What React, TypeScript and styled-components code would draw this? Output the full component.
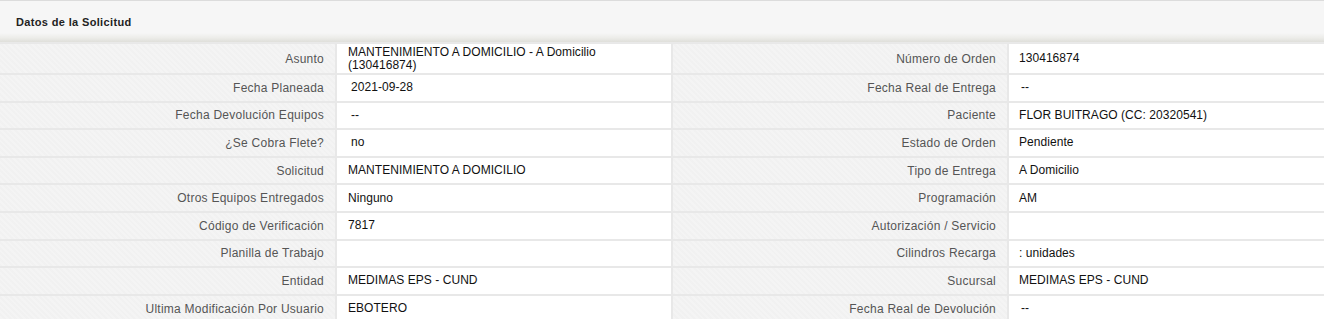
import React from 'react';
import styled, { createGlobalStyle } from 'styled-components';

const GlobalStyle = createGlobalStyle`
  html, body {
    margin: 0;
    padding: 0;
    background: #ffffff;
  }
  body {
    font-family: 'Liberation Sans', Arial, sans-serif;
    font-size: 12px;
  }
`;

const Panel = styled.section`
  width: 1324px;
  background: #e8e8e8;
`;

const PanelHeader = styled.header`
  height: 43px;
  box-sizing: border-box;
  border-top: 1px solid #dcdcdc;
  border-bottom: 1px solid #e9e9e9;
  background: linear-gradient(
    to bottom,
    #f6f6f6 0%,
    #f6f6f6 78%,
    #ecece9 90%,
    #dfdfda 100%
  );
  display: flex;
  align-items: center;
  padding-left: 16px;
`;

const Title = styled.h3`
  margin: 0;
  font-size: 11px;
  font-weight: bold;
  color: #222;
  letter-spacing: 0.35px;
`;

const Grid = styled.div`
  display: grid;
  grid-template-columns: 335px 334px 334px 1fr;
  grid-template-rows: 29px repeat(9, 25.6px);
  gap: 2px;
  padding-top: 1px;
`;

const Label = styled.div`
  display: flex;
  align-items: center;
  justify-content: flex-end;
  padding-right: 11px;
  color: #555;
  letter-spacing: 0.25px;
  background-color: #f4f4f4;
  background-image: repeating-linear-gradient(
    45deg,
    rgba(0, 0, 0, 0.012) 0px,
    rgba(0, 0, 0, 0.012) 2px,
    rgba(255, 255, 255, 0.03) 2px,
    rgba(255, 255, 255, 0.03) 4px
  );
  white-space: nowrap;
`;

const Value = styled.div<{ $pad?: number }>`
  display: flex;
  align-items: center;
  padding-left: ${(p) => p.$pad ?? 11}px;
  padding-right: 8px;
  background: #ffffff;
  color: #111;
  line-height: 13px;
  letter-spacing: 0.05px;
`;

type Field = { label: string; value: string; pad?: number };

const rows: [Field, Field][] = [
  [
    { label: 'Asunto', value: 'MANTENIMIENTO A DOMICILIO - A Domicilio (130416874)' },
    { label: 'Número de Orden', value: '130416874', pad: 10 },
  ],
  [
    { label: 'Fecha Planeada', value: '2021-09-28', pad: 14 },
    { label: 'Fecha Real de Entrega', value: '--', pad: 12 },
  ],
  [
    { label: 'Fecha Devolución Equipos', value: '--', pad: 14 },
    { label: 'Paciente', value: 'FLOR BUITRAGO (CC: 20320541)', pad: 10 },
  ],
  [
    { label: '¿Se Cobra Flete?', value: 'no', pad: 14 },
    { label: 'Estado de Orden', value: 'Pendiente', pad: 10 },
  ],
  [
    { label: 'Solicitud', value: 'MANTENIMIENTO A DOMICILIO' },
    { label: 'Tipo de Entrega', value: 'A Domicilio', pad: 10 },
  ],
  [
    { label: 'Otros Equipos Entregados', value: 'Ninguno' },
    { label: 'Programación', value: 'AM', pad: 10 },
  ],
  [
    { label: 'Código de Verificación', value: '7817' },
    { label: 'Autorización / Servicio', value: '', pad: 10 },
  ],
  [
    { label: 'Planilla de Trabajo', value: '' },
    { label: 'Cilindros Recarga', value: ': unidades', pad: 10 },
  ],
  [
    { label: 'Entidad', value: 'MEDIMAS EPS - CUND' },
    { label: 'Sucursal', value: 'MEDIMAS EPS - CUND', pad: 10 },
  ],
  [
    { label: 'Ultima Modificación Por Usuario', value: 'EBOTERO' },
    { label: 'Fecha Real de Devolución', value: '--', pad: 12 },
  ],
];

const App = (): JSX.Element => (
  <>
    <GlobalStyle />
    <Panel>
      <PanelHeader>
        <Title>Datos de la Solicitud</Title>
      </PanelHeader>
      <Grid>
        {rows.map((pair, i) =>
          pair.map((f, j) => (
            <React.Fragment key={`${i}-${j}`}>
              <Label>{f.label}</Label>
              <Value $pad={f.pad}>{f.value}</Value>
            </React.Fragment>
          ))
        )}
      </Grid>
    </Panel>
  </>
);

export default App;
